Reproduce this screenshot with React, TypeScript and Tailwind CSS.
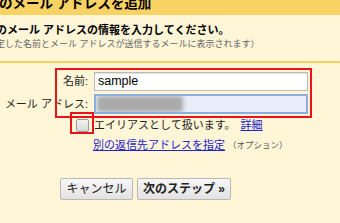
import React from "react";

export default function App() {
  const font = { fontFamily: '"Liberation Sans", "Noto Sans CJK JP", sans-serif' };
  return (
    <div
      className="relative w-[340px] h-[223px] overflow-hidden bg-[#fff6d8] text-black"
      style={font}
    >
      {/* header band */}
      <div className="h-[15px] bg-[#f9d264] overflow-hidden">
        <div className="-mt-[5px] -ml-[1px] text-[13.5px] leading-[18px] font-bold whitespace-nowrap">
          のメール アドレスを追加
        </div>
      </div>

      {/* intro */}
      <div className="mt-[7px] -ml-[4px] text-[11px] leading-[16px] font-bold whitespace-nowrap">
        のメール アドレスの情報を入力してください。
      </div>
      <div className="-ml-[4px] text-[9px] leading-[12px] text-[#666] whitespace-nowrap">
        定した名前とメール アドレスが送信するメールに表示されます）
      </div>

      <div className="mt-[11px] h-[2px] bg-[#f6cf64]" />

      {/* form */}
      <div className="mt-[9px] flex flex-col gap-[3px] text-[11px]">
        <div className="flex items-center h-[19px]">
          <div className="w-[89px] text-right pr-[1px] text-[#222]">名前:</div>
          <div className="ml-[5px] w-[214px] h-[19px] border border-[#b9b9b9] bg-white shadow-[inset_0_1px_1px_rgba(0,0,0,0.12)] flex items-center pl-[3px] text-[12.5px] text-black">
            sample
          </div>
        </div>
        <div className="flex items-center h-[20px]">
          <div className="w-[89px] text-right pr-[1px] text-[#222] whitespace-nowrap">メール アドレス:</div>
          <div className="ml-[5px] w-[214px] h-[20px] border-2 border-[#8daee0] bg-[#e9eefa] flex items-center overflow-hidden">
            <div className="ml-[1px] w-[86px] h-[16px] bg-[#a9a9aa] blur-[2px]" />
          </div>
        </div>
      </div>

      <div className="mt-[3px] h-[16px] ml-[76px] flex items-center text-[11px] whitespace-nowrap">
        <div className="w-[13px] h-[13px] rounded-[2px] border border-[#9a9a9a] bg-gradient-to-b from-[#f4f4f4] to-[#d8d8d8]" />
        <span className="ml-[5px] text-[#222]">エイリアスとして扱います。</span>
        <a className="ml-[5px] text-[#2222cc] underline">詳細</a>
      </div>

      <div className="mt-[4px] h-[16px] ml-[93px] flex items-center whitespace-nowrap">
        <a className="text-[11px] text-[#2222cc] underline">別の返信先アドレスを指定</a>
        <span className="ml-[3px] text-[8.5px] text-[#555]">（オプション）</span>
      </div>

      <div className="mt-[25px] ml-[60px] flex gap-[4px]">
        <button className="h-[22px] w-[73px] rounded-[2px] border border-[#b8b8b8] bg-gradient-to-b from-[#f7f7f7] to-[#e2e2e2] text-[12px] text-[#222]">
          キャンセル
        </button>
        <button className="h-[22px] w-[94px] rounded-[2px] border border-[#b8b8b8] bg-gradient-to-b from-[#f7f7f7] to-[#e2e2e2] text-[12px] font-bold text-[#222]">
          次のステップ »
        </button>
      </div>

      {/* red annotation boxes */}
      <div className="absolute left-[55px] top-[68px] w-[257px] h-[50px] border-2 border-[#e8141c]" />
      <div className="absolute left-[70px] top-[112px] w-[24px] h-[22px] border-2 border-[#e8141c]" />
    </div>
  );
}
